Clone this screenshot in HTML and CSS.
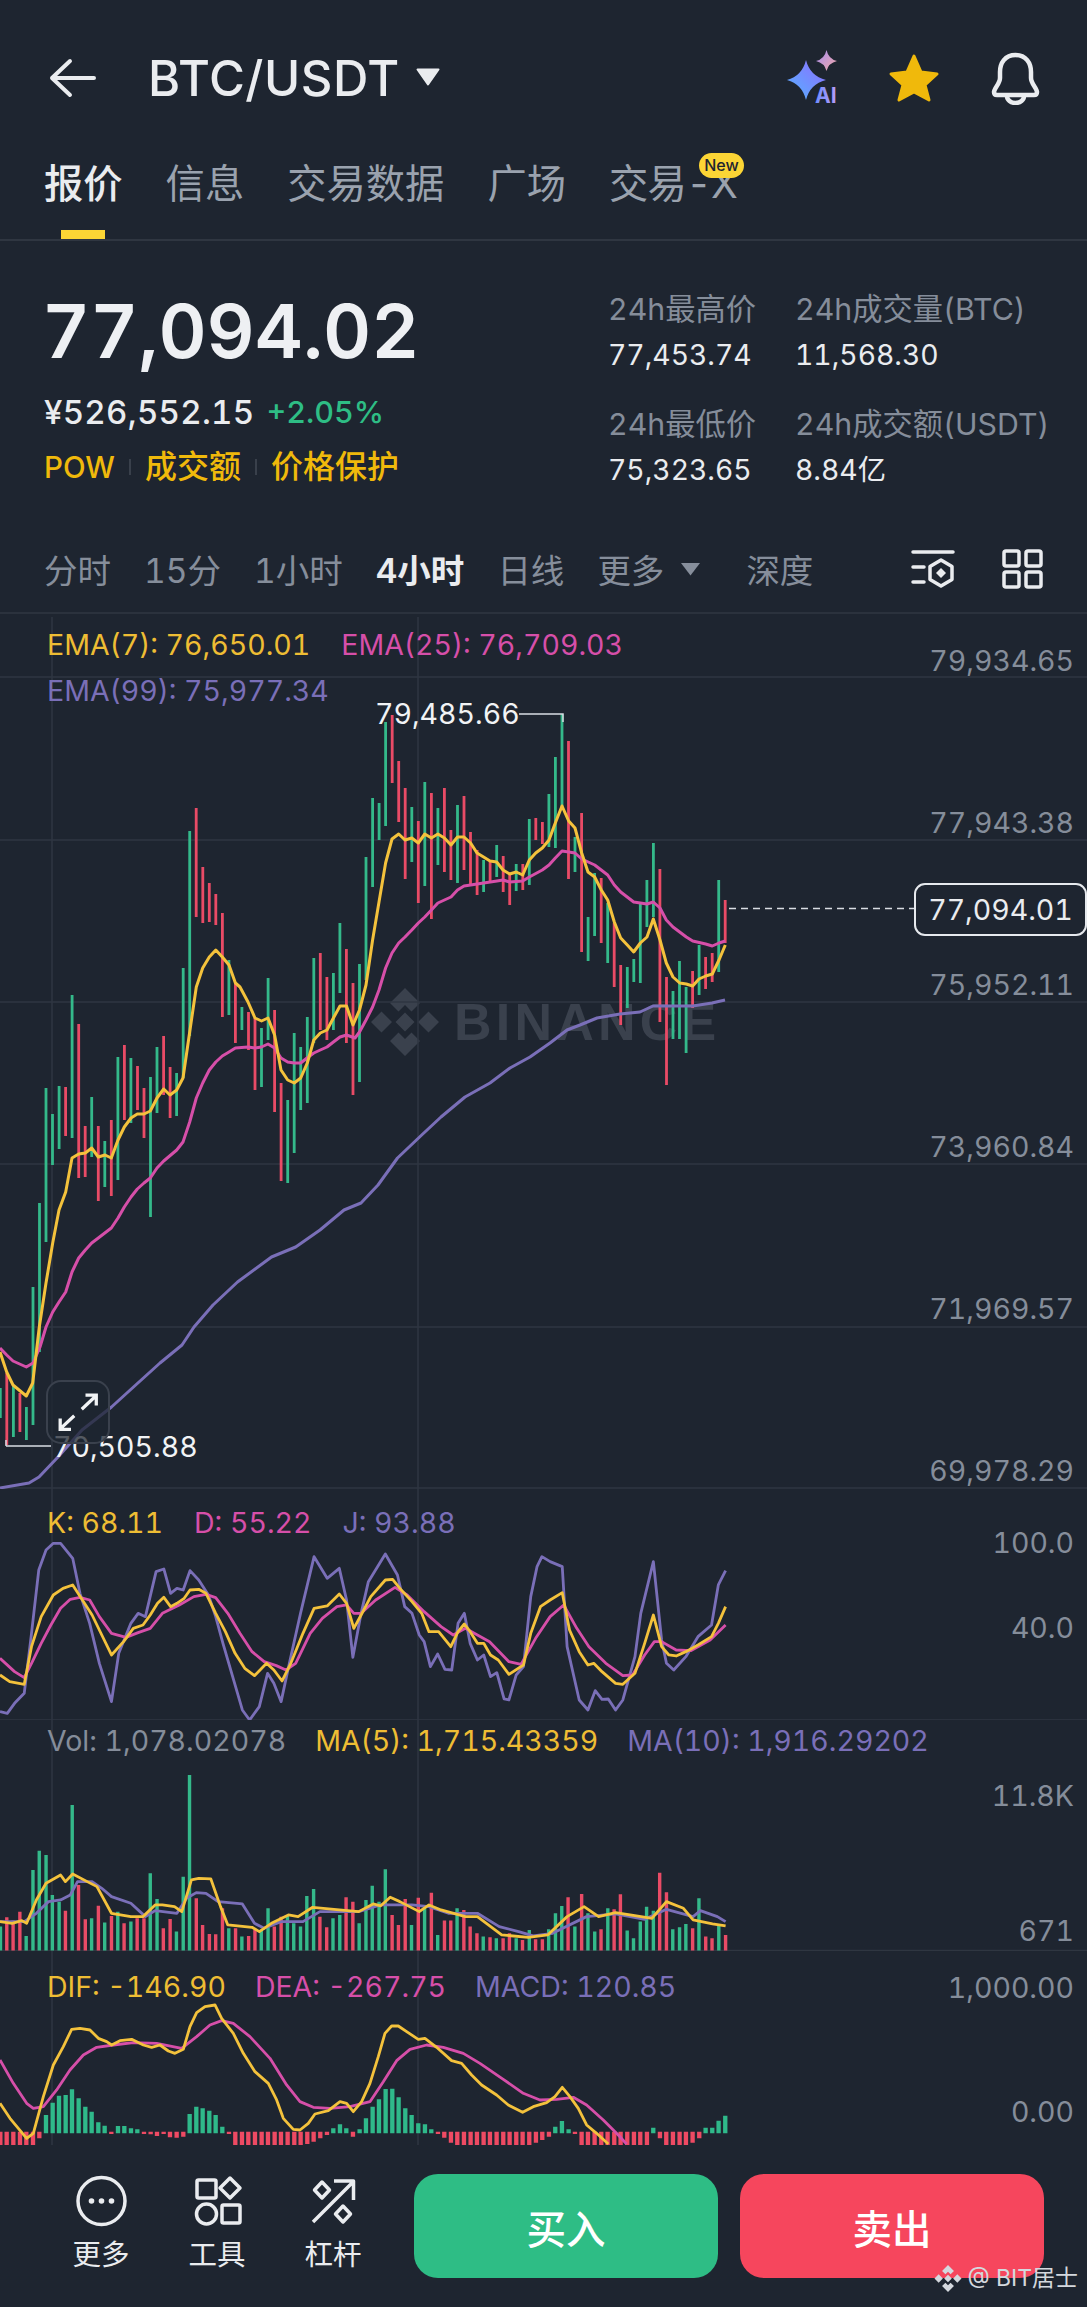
FILE: index.html
```html
<!DOCTYPE html>
<html lang="zh">
<head>
<meta charset="utf-8">
<title>BTC/USDT</title>
<link rel="stylesheet" href="styles.css">
</head>
<body>
<div class="app">
  <header class="header">
    <svg class="ic-back" viewBox="48 58 48 40"><path d="M94 78H52M70 61L52 78L70 95"/></svg>
    <h1 class="pair">BTC/USDT</h1>
    <svg class="ic-caret" viewBox="0 0 24 18"><path d="M1.5 1.5H22.5L12 16.5Z"/></svg>
    <div class="header-icons">
      <svg class="ic-ai" viewBox="785 50 58 60">
        <defs>
          <linearGradient id="g1" x1="0" y1="1" x2="1" y2="0"><stop offset="0" stop-color="#54b4ff"/><stop offset="1" stop-color="#8f6bff"/></linearGradient>
          <linearGradient id="g2" x1="0" y1="0" x2="1" y2="1"><stop offset="0" stop-color="#a58cf0"/><stop offset="1" stop-color="#f2a9a6"/></linearGradient>
          <linearGradient id="g3" x1="0" y1="0" x2="1" y2="0"><stop offset="0" stop-color="#6f8dff"/><stop offset="1" stop-color="#b79cf5"/></linearGradient>
        </defs>
        <path fill="url(#g1)" d="M806 63Q810 79 826 83Q810 87 806 103Q802 87 787 83Q802 79 806 63Z"/>
        <path fill="url(#g2)" d="M826.5 53Q828.500 62 837 64Q828.500 66 826.500 74Q824.500 66 816 64Q824.500 62 826.500 53Z"/>
        <text class="ai-text" x="815" y="106" fill="url(#g3)">AI</text>
      </svg>
      <svg class="ic-star" viewBox="888 54 52 50"><path d="M914 57L921 73L937 75L925 86L929 101L914 93L899 101L903 86L891 75L907 73Z"/></svg>
      <svg class="ic-bell" viewBox="990 52 51 53"><path d="M1015.500 55C1005 55 1000 63 1000 72V78C1000 84 994 88 994 92Q994 95 997 95H1034Q1037 95 1037 92C1037 88 1031 84 1031 78V72C1031 63 1026 55 1015.500 55Z"/><path d="M1007 96A8.500 7 0 0 0 1024 96"/></svg>
    </div>
  </header>

  <nav class="tabs">
    <div class="tab active"><span>报价</span><i class="tab-mark"></i></div>
    <div class="tab"><span>信息</span></div>
    <div class="tab"><span>交易数据</span></div>
    <div class="tab"><span>广场</span></div>
    <div class="tab new"><span>交易-X</span><b class="badge">New</b></div>
  </nav>

  <section class="quote">
    <div class="quote-main">
      <div class="last">77,094.02</div>
      <div class="fiat"><span class="cny">¥526,552.15</span><span class="up">+2.05%</span></div>
      <div class="tags"><span class="pow">POW</span><i></i><span>成交额</span><i></i><span>价格保护</span></div>
    </div>
    <dl class="stats">
      <dt>24h最高价</dt><dt>24h成交量(BTC)</dt>
      <dd>77,453.74</dd><dd>11,568.30</dd>
      <dt class="second">24h最低价</dt><dt class="second">24h成交额(USDT)</dt>
      <dd>75,323.65</dd><dd>8.84亿</dd>
    </dl>
  </section>

  <div class="toolbar">
    <span>分时</span><span>15分</span><span>1小时</span><span class="on">4小时</span><span>日线</span>
    <span class="more">更多<svg viewBox="0 0 21 14"><path d="M1 1H20L10.500 13.500Z"/></svg></span>
    <span class="depth">深度</span>
    <svg class="ic-tool ic-settings" viewBox="911 551 44 42"><path d="M913 556H953M913 571H924M913 586H924"/><path d="M941 564L952 570.500V583.500L941 590L930 583.500V570.500Z"/><path class="solid" d="M941 572L946 577L941 582L936 577Z"/></svg>
    <svg class="ic-tool ic-grid" viewBox="1001 551 42 41"><rect x="1004" y="554" width="15" height="15" rx="2"/><rect x="1026" y="554" width="15" height="15" rx="2"/><rect x="1004" y="575" width="15" height="15" rx="2"/><rect x="1026" y="575" width="15" height="15" rx="2"/></svg>
  </div>

  <div class="charts">
    <div class="panel panel-main">
      <div class="mark">
        <svg viewBox="0 0 68 68"><path d="M34 0L49 15L40.500 23.500L34 17L27.500 23.500L19 15ZM10.500 23.500L21 34L10.500 44.500L0 34ZM57.500 23.500L68 34L57.500 44.500L47 34ZM34 24.500L43.500 34L34 43.500L24.500 34ZM19 53L27.500 44.500L34 51L40.500 44.500L49 53L34 68Z"/></svg>
        <span>BINANCE</span>
      </div>
      <svg class="plot" viewBox="0 617 1087 872">
        <path class="grid" d="M0 677H1087M0 840H1087M0 1002H1087M0 1164H1087M0 1327H1087M0 1488H1087M52 617V1489M418 617V1489"/>
        <path class="bar-g" d="M.3 1388V1418M13.400 1385V1437M26.400 1407V1440M33 1287V1425M39.500 1203V1352M46 1088V1242M52.500 1114V1165M59.100 1086V1149M72.100 995V1138M91.700 1097V1157M104.800 1141V1187M117.900 1057V1180M130.900 1058V1123M150.500 1077V1217M157 1047V1113M176.600 1073V1116M183.200 968V1078M189.700 831V1036M228.900 960V1015M241.900 1007V1030M261.500 1028V1087M268.100 978V1040M287.700 1100V1183M294.200 1033V1153M300.700 1047V1110M307.300 1017V1103M313.800 958V1043M333.400 973V1030M339.900 923V993M359.500 964V1082M366 857V980M372.600 798V887M379.100 803V840M385.600 722V826M411.800 807V862M424.800 782V886M437.900 808V865M457.500 805V883M483.600 860V892M496.700 845V877M516.200 864V891M529.300 819V885M548.900 794V847M555.400 757V848M562 714V807M575 837V872M588.100 917V961M594.600 873V936M607.700 903V963M627.300 967V1008M633.800 959V982M640.300 903V983M646.900 880V927M653.400 843V917M673 991V1039M679.500 961V1039M686.100 987V1053M699.100 945V995M718.700 880V972"/>
        <path class="bar-r" d="M6.800 1373V1445M19.900 1393V1432M65.600 1087V1136M78.700 1024V1178M85.200 1126V1177M98.300 1126V1201M111.300 1120V1196M124.400 1045V1120M137.500 1066V1110M144 1088V1138M163.600 1036V1095M170.100 1067V1118M196.200 808V917M202.800 867V923M209.300 883V922M215.800 894V925M222.400 913V1017M235.400 983V1043M248.500 1012V1050M255 1018V1090M274.600 1010V1112M281.100 1083V1181M320.300 953V1030M326.900 977V1040M346.400 949V1043M353 983V1095M392.200 715V783M398.700 761V822M405.200 788V879M418.300 821V903M431.400 793V919M444.400 788V872M450.900 830V880M464 796V870M470.500 832V885M477.100 850V895M490.100 862V883M503.200 856V892M509.700 873V905M522.800 864V890M535.800 818V840M542.400 822V844M568.500 741V879M581.600 813V952M601.200 878V943M614.200 923V987M620.700 965V1025M659.900 869V1022M666.500 977V1085M692.600 971V1008M705.600 957V989M712.200 953V982M725.200 900V943"/>
        <polyline class="ln purple" points="0,1488 29,1483 39,1477 58,1457 82,1430 111.500,1407 135.700,1385 160,1363 182,1345 194,1327 213,1305 237.500,1282 271.500,1257 295.700,1247 320,1230 344,1210 361,1203 378,1185 397.500,1158 421.700,1135 441,1117 465,1097 490,1083 510,1068 530,1057 550,1043 567,1030 580,1025 597,1018 620,1014 640,1012 653,1006 673,1006 692.700,1006 712,1003 725,1000"/>
        <polyline class="ln pink" points="0,1348 6.700,1355 13,1361 26.300,1367 33,1363 40,1347 46,1327 52.700,1312 59,1302 65.700,1292 72,1272 78.700,1258 85.300,1250 91.700,1243 98.300,1238 111.300,1228 118,1218 124.300,1207 131,1197 137.300,1189 144,1183 150.300,1178 157,1168 163.700,1161 176.700,1150 183,1142 189.700,1122 196.300,1098 202.700,1083 209.300,1070 215.800,1062 222.300,1056 229,1052 235.400,1048 248,1047 255,1048 261.500,1047 268,1044 274.600,1048 281,1058 287.700,1062 294.200,1063 300.700,1063 307,1058 313.800,1053 320.300,1050 327,1047 333.400,1042 340,1037 346.500,1035 355,1038 359.500,1032 366,1020 372.600,1007 379,990 385.600,968 392,953 398.700,943 405,937 411.800,930 418.300,923 424.800,917 431.400,910 437.900,903 444.400,900 451,897 457.500,890 464,886 470.600,885 483.600,883 497,881 503,880 509.700,882 522.700,881 529.300,877 542.300,870 549,865 555.300,858 562,851 568.700,852 575,853 581.700,859 594.700,865 607.700,875 614.300,885 620.700,892 633.700,902 647,904 653.300,902 660,908 666.300,920 673,927 686.300,937 692.700,941 705.700,944 712.300,946 719,943 725.300,941"/>
        <polyline class="ln yellow" points="0,1352 6.700,1372 13,1385 26.300,1396 32.700,1383 39.300,1327 46,1283 52.700,1243 59,1210 65.700,1192 72,1158 78.700,1154 85.300,1153 91.700,1148 98.300,1157 105,1155 111.300,1158 118,1140 124.300,1127 131,1118 137.300,1114 144,1114 150.300,1111 157,1098 163.700,1089 170,1095 176.700,1090 183,1078 189.700,1032 196.300,987 202.700,968 209.300,957 215.800,950 222.300,957 229,965 235.400,983 240,987 248,1002 255,1018 261.500,1021 268,1018 274.600,1035 281,1070 287.700,1080 294.200,1083 300.700,1078 307.300,1063 313.800,1040 320.300,1033 327,1030 333.400,1018 340,1006 346.500,1006 353,1025 359.500,1010 366,985 372.600,940 379,902 385.600,863 392,839 398.700,834 405,840 411.800,838 418.300,843 424.800,834 431.400,838 437.900,834 444.400,838 451,845 457.500,837 464,837 470.600,843 477,853 483.600,857 490,861 496.700,862 503,870 509.700,874 516.300,872 522.700,875 529.300,860 535.700,853 542.300,848 549,840 555.300,823 562,806 568.700,821 575,828 581.700,853 588,872 594.700,877 601.300,890 607.700,900 614.300,922 620.700,938 627.300,945 633.700,952 640.300,943 647,937 653.300,919 660,940 666.300,963 673,977 679.700,983 686.300,984 692.700,986 699,979 705.700,976 712.300,974 719,960 725.300,945"/>
        <path class="leader" d="M519 714H563V722M6 1446H51M6 1446V1440"/>
        <path class="dash" d="M729 908.500H914"/>
      </svg>
      <div class="legend legend-main">
        <span class="c-y">EMA(7): 76,650.01</span><span class="c-p">EMA(25): 76,709.03</span><span class="c-v">EMA(99): 75,977.34</span>
      </div>
      <span class="extreme high">79,485.66</span>
      <span class="extreme low">70,505.88</span>
      <div class="axis axis-main"><span>79,934.65</span><span>77,943.38</span><span>75,952.11</span><span>73,960.84</span><span>71,969.57</span><span>69,978.29</span></div>
      <div class="price-tag">77,094.01</div>
      <button class="expand" aria-label="expand"><svg viewBox="0 0 64 64"><path d="M36 29L51 15M40 14H51.500V25M28 36L13 50M13 39V50.500H24.500"/></svg></button>
    </div>

    <div class="panel panel-kdj">
      <svg class="plot" viewBox="0 1489 1087 231">
        <path class="grid" d="M52 1489V1720M418 1489V1720M0 1720H1087"/>
        <g transform="translate(0 1500) scale(.4847 .3333)">
          <polyline class="ln thin purple" points="0,635 15,640 30,610 50,580 65,400 80,210 95,150 110,130 125,130 150,175 165,280 185,370 205,490 230,605 245,460 270,370 285,340 300,350 322,215 338,207 352,280 365,265 378,270 392,212 410,240 430,285 445,350 460,430 480,530 500,630 515,660 535,620 552,520 565,550 580,605 597,490 620,340 648,170 675,235 700,205 715,300 728,472 745,340 760,245 795,162 820,225 835,320 850,340 865,405 875,425 888,500 903,462 918,508 932,510 945,370 958,340 970,430 985,480 998,465 1012,530 1025,518 1040,597 1050,600 1065,525 1080,500 1095,290 1108,200 1118,170 1135,185 1160,200 1170,440 1195,600 1213,630 1228,572 1242,598 1255,597 1270,630 1285,600 1310,470 1322,340 1348,185 1365,420 1375,490 1390,510 1415,470 1440,410 1468,375 1482,255 1497,212"/>
          <polyline class="ln thin pink" points="0,475 30,515 50,533 65,490 85,430 105,375 125,325 145,298 165,292 185,300 205,350 230,400 260,412 285,398 310,385 335,340 370,315 400,290 425,283 445,293 470,340 495,400 520,455 545,485 570,497 590,510 610,490 640,400 665,355 695,320 715,315 730,340 745,340 775,300 815,262 840,285 875,335 910,380 935,405 960,385 985,405 1010,425 1050,485 1075,493 1105,415 1135,350 1163,315 1190,385 1215,440 1250,490 1285,527 1305,525 1330,465 1350,425 1365,425 1395,450 1425,452 1465,420 1497,375"/>
          <polyline class="ln thin yellow" points="0,525 20,545 50,553 65,440 85,350 110,285 130,265 150,255 170,300 190,345 210,405 230,465 255,425 275,385 295,375 310,345 325,310 338,292 352,320 365,310 380,295 392,270 410,268 425,280 445,340 465,395 485,460 505,505 525,527 550,490 565,510 582,543 600,490 625,400 648,325 675,318 700,282 715,310 730,385 745,345 765,290 795,240 810,238 825,265 850,305 870,340 885,395 905,395 930,440 945,395 958,372 970,395 985,430 998,430 1012,465 1028,480 1050,523 1080,495 1095,400 1115,320 1135,300 1160,278 1175,390 1195,455 1213,495 1225,490 1242,515 1270,550 1285,553 1310,520 1330,430 1348,345 1365,440 1380,465 1395,468 1415,455 1440,435 1468,410 1482,370 1497,320"/>
        </g>
      </svg>
      <div class="legend legend-kdj"><span class="c-y">K: 68.11</span><span class="c-p">D: 55.22</span><span class="c-v">J: 93.88</span></div>
      <div class="axis axis-kdj"><span>100.0</span><span>40.0</span></div>
    </div>

    <div class="panel panel-vol">
      <svg class="plot" viewBox="0 1720 1087 231">
        <path class="grid" d="M52 1720V1951M418 1720V1951M0 1950.500H1087"/>
        <g transform="translate(0 1500) scale(.4847 .3333)">
          <path class="vol-g" d="M1 1352V1280M54 1352V1308M68 1352V1110M81 1352V1052M95 1352V1065M108 1352V1185M122 1352V1205M149 1352V915M189 1352V1255M216 1352V1268M243 1352V1235M270 1352V1265M310 1352V1120M324 1352V1197M364 1352V1295M378 1352V1130M391 1352V825M472 1352V1285M499 1352V1310M539 1352V1290M553 1352V1225M593 1352V1245M606 1352V1270M620 1352V1280M633 1352V1188M647 1352V1167M687 1352V1255M701 1352V1245M741 1352V1270M755 1352V1200M768 1352V1157M782 1352V1205M795 1352V1108M849 1352V1275M876 1352V1220M903 1352V1305M943 1352V1225M997 1352V1310M1024 1352V1315M1065 1352V1315M1092 1352V1290M1132 1352V1288M1146 1352V1240M1159 1352V1218M1186 1352V1280M1213 1352V1240M1227 1352V1295M1254 1352V1225M1294 1352V1292M1307 1352V1315M1321 1352V1265M1334 1352V1220M1348 1352V1232M1388 1352V1288M1402 1352V1282M1415 1352V1272M1442 1352V1195M1483 1352V1275"/>
          <path class="vol-r" d="M14 1352V1252M27 1352V1262M41 1352V1235M135 1352V1232M162 1352V1155M176 1352V1258M203 1352V1217M230 1352V1248M256 1352V1270M283 1352V1255M297 1352V1255M337 1352V1285M351 1352V1257M405 1352V1195M418 1352V1275M432 1352V1302M445 1352V1303M459 1352V1225M486 1352V1285M513 1352V1308M526 1352V1290M566 1352V1280M580 1352V1250M660 1352V1250M674 1352V1282M714 1352V1192M728 1352V1205M809 1352V1245M822 1352V1275M836 1352V1197M863 1352V1193M890 1352V1178M917 1352V1262M930 1352V1262M957 1352V1230M970 1352V1280M984 1352V1300M1011 1352V1312M1038 1352V1315M1051 1352V1300M1078 1352V1320M1105 1352V1318M1119 1352V1318M1172 1352V1192M1200 1352V1182M1240 1352V1288M1267 1352V1228M1280 1352V1183M1361 1352V1118M1375 1352V1177M1429 1352V1285M1456 1352V1310M1469 1352V1315M1497 1352V1305"/>
          <polyline class="ln thin purple" points="0,1265 50,1265 75,1240 100,1205 125,1200 145,1185 160,1145 190,1145 210,1165 230,1190 270,1210 300,1250 320,1232 365,1240 385,1195 405,1178 425,1180 450,1205 500,1212 525,1270 545,1285 580,1265 625,1265 660,1235 740,1235 785,1215 850,1215 885,1220 925,1240 985,1240 1030,1280 1070,1295 1100,1308 1140,1300 1210,1250 1270,1242 1330,1258 1375,1228 1430,1250 1445,1232 1480,1250 1497,1265"/>
          <polyline class="ln thin yellow" points="0,1265 25,1270 45,1262 55,1270 75,1200 95,1150 125,1125 135,1145 150,1122 180,1145 200,1160 230,1240 270,1250 295,1250 320,1215 335,1215 360,1220 375,1235 395,1140 410,1135 435,1137 455,1220 470,1275 520,1282 535,1295 560,1270 595,1245 615,1250 645,1222 700,1230 740,1235 770,1212 785,1218 805,1192 825,1205 865,1235 885,1215 910,1230 960,1250 985,1250 1035,1305 1090,1312 1130,1305 1170,1250 1205,1220 1235,1250 1270,1238 1300,1245 1345,1255 1375,1205 1410,1225 1430,1260 1470,1272 1497,1278"/>
        </g>
      </svg>
      <div class="legend legend-vol"><span class="c-g">Vol: 1,078.02078</span><span class="c-y">MA(5): 1,715.43359</span><span class="c-v">MA(10): 1,916.29202</span></div>
      <div class="axis axis-vol"><span>11.8K</span><span>671</span></div>
    </div>

    <div class="panel panel-macd">
      <svg class="plot" viewBox="0 1951 1087 199">
        <path class="grid" d="M52 1951V2145M418 1951V2145"/>
        <g transform="translate(0 1990) scale(.3333)">
          <path class="hist-g" d="M138 430V375M158 430V338M177 430V317M197 430V315M216 430V298M236 430V325M256 430V350M275 430V365M295 430V397M314 430V407M354 430V408M373 430V408M393 430V415M412 430V418M569 430V372M589 430V350M608 430V355M628 430V362M647 430V375M667 430V410M1000 430V415M1020 430V403M1039 430V415M1079 430V418M1098 430V385M1118 430V350M1137 430V328M1157 430V297M1177 430V296M1196 430V322M1216 430V355M1235 430V375M1255 430V400M1275 430V403M1294 430V418M1666 430V410M1686 430V393M1706 430V418M1960 430V413M2117 430V413M2137 430V413M2156 430V392M2176 430V377"/>
          <path class="hist-r" d="M1 425V465M20 425V465M40 425V465M60 425V465M79 425V465M99 425V465M118 425V445M334 425V432M432 425V432M452 425V433M471 425V438M491 425V432M510 425V442M530 425V443M550 425V440M687 425V432M706 425V465M726 425V465M745 425V465M765 425V465M785 425V465M804 425V465M824 425V465M843 425V465M863 425V465M883 425V465M902 425V465M922 425V462M941 425V455M961 425V445M981 425V435M1059 425V440M1314 425V432M1333 425V443M1353 425V458M1372 425V465M1392 425V465M1412 425V465M1431 425V465M1451 425V465M1470 425V465M1490 425V465M1510 425V465M1529 425V465M1549 425V465M1568 425V465M1588 425V465M1608 425V458M1627 425V450M1647 425V440M1725 425V432M1745 425V465M1764 425V465M1784 425V465M1804 425V465M1823 425V465M1843 425V465M1862 425V465M1882 425V465M1902 425V465M1921 425V465M1941 425V465M1980 425V445M1999 425V465M2019 425V465M2039 425V465M2058 425V465M2078 425V458M2098 425V445"/>
          <polyline class="ln thin pink" points="0,210 40,280 80,340 100,355 130,350 170,300 210,240 250,195 290,172 340,165 400,158 470,160 545,175 590,140 630,105 665,92 700,100 750,140 810,205 860,285 900,335 940,352 990,355 1050,350 1110,335 1150,275 1190,212 1230,178 1280,165 1330,172 1390,190 1440,220 1510,268 1570,310 1620,330 1670,328 1720,322 1760,345 1810,390 1855,435 1880,462"/>
          <polyline class="ln thin yellow" points="0,340 30,385 80,445 100,430 130,320 160,225 190,170 215,118 240,115 270,120 295,145 320,155 335,165 360,152 395,148 430,165 455,172 480,165 505,183 525,190 550,178 570,110 590,68 615,50 645,45 665,85 700,130 730,190 765,245 805,280 830,330 850,385 880,418 900,420 925,400 945,372 985,362 1020,335 1040,340 1060,365 1085,335 1110,280 1135,200 1155,130 1175,108 1195,108 1220,125 1255,148 1275,145 1310,172 1355,212 1385,220 1415,255 1445,285 1490,315 1525,345 1568,367 1600,350 1640,338 1665,320 1687,292 1710,320 1735,355 1760,405 1790,430 1825,462"/>
        </g>
      </svg>
      <div class="legend legend-macd"><span class="c-y">DIF: -146.90</span><span class="c-p">DEA: -267.75</span><span class="c-v">MACD: 120.85</span></div>
      <div class="axis axis-macd"><span>1,000.00</span><span>0.00</span></div>
    </div>
  </div>

  <footer class="actions">
    <div class="action">
      <svg viewBox="74 2178 53 53"><circle cx="100.500" cy="2205" r="23.500"/><g class="solid"><circle cx="90.500" cy="2205" r="2.800"/><circle cx="100.500" cy="2205" r="2.800"/><circle cx="110.500" cy="2205" r="2.800"/></g></svg>
      <span>更多</span>
    </div>
    <div class="action">
      <svg viewBox="190 2178 53 53"><rect x="196" y="2184" width="19" height="18" rx="1.500"/><path d="M229 2182L239 2192L229 2202L219 2192Z"/><circle cx="205.500" cy="2218" r="10"/><rect x="221" y="2209" width="18" height="18" rx="1.500"/></svg>
      <span>工具</span>
    </div>
    <div class="action">
      <svg viewBox="307 2178 53 53"><path d="M313 2226L353 2186M334 2185H353.500V2204"/><path d="M322 2186L329.500 2194L322 2202L314.500 2194Z"/><path d="M343 2210L350.500 2218L343 2226L335.500 2218Z"/></svg>
      <span>杠杆</span>
    </div>
    <button class="trade buy">买入</button>
    <button class="trade sell">卖出</button>
    <div class="credit">
      <svg viewBox="0 0 68 68"><path d="M34 0L49 15L40.500 23.500L34 17L27.500 23.500L19 15ZM10.500 23.500L21 34L10.500 44.500L0 34ZM57.500 23.500L68 34L57.500 44.500L47 34ZM34 24.500L43.500 34L34 43.500L24.500 34ZM19 53L27.500 44.500L34 51L40.500 44.500L49 53L34 68Z"/></svg>
      <span>@ BIT居士</span>
    </div>
  </footer>
</div>
</body>
</html>
```
FILE: styles.css
```css
* { box-sizing: border-box; margin: 0; padding: 0; }
html, body { background: #1e2530; }
body { font-family: Inter, "Noto Sans CJK SC", "Noto Sans", sans-serif; color: #eaecef; font-variant-numeric: tabular-nums; }
.app { width: 1087px; height: 2307px; overflow: hidden; display: flex; flex-direction: column; background: #1e2530; }

/* header */
.header { height: 156px; display: flex; align-items: center; padding-left: 48px; }
.ic-back { width: 48px; height: 40px; fill: none; stroke: #eaecef; stroke-width: 4; stroke-linecap: round; stroke-linejoin: round; }
.pair { font-size: 49px; font-weight: 500; letter-spacing: .5px; margin-left: 52px; line-height: 1; }
.ic-caret { width: 24px; height: 18px; margin-left: 16px; margin-top: -2px; fill: #eaecef; stroke: #eaecef; stroke-width: 2; stroke-linejoin: round; }
.header-icons { margin-left: auto; display: flex; align-items: center; padding-right: 46px; }
.ic-ai { width: 58px; height: 60px; margin-top: -2px; }
.ai-text { font: 700 21px Inter, sans-serif; }
.ic-star { width: 52px; height: 50px; margin-left: 45px; fill: #f0b90b; stroke: #f0b90b; stroke-width: 3; stroke-linejoin: round; }
.ic-bell { width: 51px; height: 53px; margin-left: 50px; fill: none; stroke: #eaecef; stroke-width: 4.500; stroke-linejoin: round; }

/* tabs */
.tabs { height: 85px; display: flex; gap: 43px; padding-left: 44px; border-bottom: 2px solid #2f3641; }
.tab { position: relative; display: flex; flex-direction: column; font-size: 39.300px; line-height: 56px; color: #9aa2ae; }
.tab.active { color: #eaecef; font-weight: 500; }
.tab-mark { display: block; width: 44px; height: 9px; margin: auto auto 0; background: #fcd535; }
.new span { letter-spacing: -.7px; }
.badge { position: absolute; left: 90px; top: -3px; height: 25px; width: 45px; border-radius: 13px; background: #fcd535; color: #1e2530; font-size: 16px; line-height: 25px; font-weight: 500; text-align: center; }

/* quote */
.quote { height: 283px; display: flex; justify-content: space-between; padding: 49px 0 0 44px; }
.last { font-size: 74.500px; line-height: 82px; font-weight: 600; margin-left: -2px; color: #eef0f3; }
.fiat { display: flex; gap: 12px; margin-top: 20px; font-size: 30.500px; line-height: 40px; font-weight: 500; }
.cny { font-size: 33px; letter-spacing: .3px; }
.up { color: #2ebd85; }
.tags { display: flex; align-items: center; margin-top: 15px; font-size: 32px; line-height: 40px; color: #f0b90b; font-weight: 500; }
.pow { font-size: 29.500px; }
.tags i { display: block; width: 2px; height: 16px; margin: 0 14px; background: #39404b; }
.stats { display: grid; grid-template-columns: 187px 292px; grid-template-rows: 46px 46px 69px 46px; margin-top: -4px; }
.stats dt { font-size: 30.300px; line-height: 46px; color: #858d9a; }
.stats dd { font-size: 28.300px; line-height: 46px; color: #eaecef; }
.stats .second { align-self: end; }

/* timeframe bar */
.toolbar { height: 90px; display: flex; align-items: center; gap: 33px; padding: 0 44px; font-size: 33.500px; color: #868e9b; border-bottom: 2px solid #2b323d; }
.toolbar .on { color: #eaecef; font-weight: 600; }
.more { display: flex; align-items: center; gap: 16px; }
.more svg { width: 21px; height: 14px; fill: #868e9b; margin-top: 2px; }
.depth { margin-left: 12px; }
.ic-tool { fill: none; stroke: #eaecef; stroke-width: 3.500; stroke-linejoin: round; stroke-linecap: round; }
.ic-settings { width: 44px; height: 42px; margin-left: auto; }
.ic-settings .solid { fill: #eaecef; stroke: none; }
.ic-grid { width: 42px; height: 41px; margin-left: 13px; }

/* charts */
.charts { display: flex; flex-direction: column; margin-top: 3px; }
.panel { position: relative; width: 1087px; }
.panel-main { height: 872px; }
.panel-kdj, .panel-vol { height: 231px; }
.panel-macd { height: 199px; }
.plot { display: block; position: relative; width: 1087px; height: 100%; }
.grid { fill: none; stroke: #2f3641; stroke-width: 1.500; }
.bar-g, .bar-r { fill: none; stroke-width: 2.800; }
.bar-g { stroke: #34b98a; }
.bar-r { stroke: #e94b66; }
.ln { fill: none; stroke-width: 3; stroke-linejoin: round; vector-effect: non-scaling-stroke; }
.thin { stroke-width: 2.800; }
.yellow { stroke: #f4c23c; }
.pink { stroke: #d64fa9; }
.purple { stroke: #7a6fb8; }
.leader { fill: none; stroke: #d9dde3; stroke-width: 1.500; }
.dash { fill: none; stroke: #d9dde3; stroke-width: 1.500; stroke-dasharray: 7 5; }
.vol-g, .vol-r { fill: none; stroke-width: 3.400; vector-effect: non-scaling-stroke; }
.vol-g { stroke: #34b98a; }
.vol-r { stroke: #e94b66; }
.hist-g, .hist-r { fill: none; stroke-width: 13; }
.hist-g { stroke: #2fb98a; }
.hist-r { stroke: #ee4a63; }

.mark { position: absolute; left: 371px; top: 371px; display: flex; align-items: center; gap: 15px; color: #3a414d; }
.mark svg { width: 68px; height: 68px; fill: #3a414d; }
.mark span { font: 700 52px "Liberation Sans", sans-serif; letter-spacing: 4.200px; }

.legend { position: absolute; left: 47px; display: flex; flex-wrap: wrap; font-size: 28.500px; line-height: 36px; }
.c-y { color: #eebd34; }
.c-p { color: #d64fa9; }
.c-v { color: #7a6fb8; }
.c-g { color: #858d9a; }
.legend-main { top: 10px; width: 620px; column-gap: 31px; row-gap: 10px; }
.legend-kdj { top: 16px; gap: 31px; }
.legend-vol { top: 3px; gap: 29px; white-space: nowrap; }
.legend-macd { top: 18px; gap: 29px; }

.axis { position: absolute; right: 13px; display: flex; flex-direction: column; align-items: flex-end; font-size: 28.500px; line-height: 36px; color: #858d9a; }
.axis-main { top: 26px; gap: 126px; }
.axis-kdj { top: 36px; gap: 49px; }
.axis-vol { top: 58px; gap: 99px; }
.axis-macd { top: 19px; gap: 88px; }

.extreme { position: absolute; font-size: 28.500px; line-height: 36px; color: #f1f3f5; }
.high { left: 375px; top: 79px; }
.low { left: 53px; top: 812px; }
.price-tag { position: absolute; right: 0; top: 266px; width: 173px; height: 53px; border: 2px solid #e6e9ed; border-radius: 11px; background: #1e2530; font-size: 28.500px; line-height: 49px; text-align: center; }
.expand { position: absolute; left: 46px; top: 763px; width: 64px; height: 64px; border: 2px solid #3a414d; border-radius: 15px; background: rgba(30,37,48,.75); }
.expand svg { display: block; width: 60px; height: 60px; fill: none; stroke: #f1f3f5; stroke-width: 3.500; }

/* bottom actions */
.actions { position: relative; flex: 1; display: flex; align-items: flex-start; padding: 24px 42px 0 0; }
.action { width: 116px; display: flex; flex-direction: column; align-items: center; gap: 10px; font-size: 28.500px; line-height: 36px; color: #eaecef; }
.action:first-child { margin-left: 43px; }
.action svg { display: block; width: 53px; height: 53px; fill: none; stroke: #eaecef; stroke-width: 3.500; stroke-linejoin: round; }
.action .solid { fill: #eaecef; stroke: none; }
.trade { height: 104px; border: 0; border-radius: 24px; color: #fff; font: 500 39.500px "Noto Sans CJK SC", sans-serif; width: 304px; }
.buy { background: #2ebd85; margin-left: 23px; }
.sell { background: #f6465d; margin-left: 22px; }
.credit { position: absolute; right: 9px; bottom: 15px; display: flex; align-items: center; gap: 6px; font-size: 23px; line-height: 28px; color: #d4d8de; }
.credit svg { width: 28px; height: 27px; fill: #d4d8de; }
```
